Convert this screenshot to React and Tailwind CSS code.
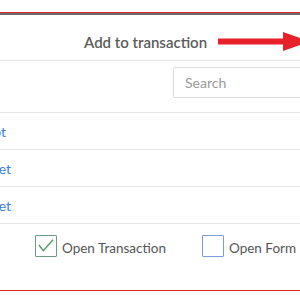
import { useState } from 'react';

const rows = [
  { label: 'Receipt', end: 'w-[6px]' },
  { label: 'Worksheet', end: 'w-[11px]' },
  { label: 'Timesheet', end: 'w-[11px]' },
];

const Divider = () => <div className="h-px bg-[#e9e5e5]" />;

const App = () => {
  const [openTransaction, setOpenTransaction] = useState(true);
  const [openForm, setOpenForm] = useState(false);

  return (
    <div
      className="relative w-[300px] h-[300px] overflow-hidden bg-white"
      style={{ fontFamily: 'Lato, "Open Sans", sans-serif' }}
    >
      {/* top rule */}
      <div className="h-[12px]" />
      <div className="h-px bg-[#e3262d]" />
      <div className="h-[2px] bg-[#6a6a6a]" />

      {/* header */}
      <div className="h-[45px] pt-[17px] pl-[84px]">
        <h2 className="text-[15px] leading-[20px] font-semibold text-[#5c5c5c] whitespace-nowrap">
          Add to transaction
        </h2>
      </div>
      <Divider />

      {/* search */}
      <div className="h-[51px] pt-[6px] pl-[173px]">
        <input
          type="text"
          placeholder="Search"
          className="w-[160px] h-[31px] border border-[#dcdcdc] rounded-[2px] px-[11px] text-[14px] text-[#555] placeholder:text-[#9a9a9a] outline-none"
        />
      </div>
      <Divider />

      {/* list */}
      {rows.map((row) => (
        <div key={row.label}>
          <div className="h-[36px] flex items-center">
            <div className={`${row.end} flex justify-end whitespace-nowrap`}>
              <a href="#" className="text-[14px] text-[#3b7fd9]">
                {row.label}
              </a>
            </div>
          </div>
          <Divider />
        </div>
      ))}

      {/* options */}
      <div className="h-[66px] pt-[11px] flex items-start">
        <label className="flex items-end ml-[35px] cursor-pointer">
          <button
            type="button"
            onClick={() => setOpenTransaction(!openTransaction)}
            className="w-[22px] h-[22px] border border-[#6f9a82] rounded-[1px] flex items-center justify-center"
          >
            {openTransaction && (
              <svg width="20" height="20" viewBox="0 0 20 20" fill="none">
                <path d="M3 9 L7.3 14.6 L17 3.8" stroke="#4f9a6a" strokeWidth="1.4" />
              </svg>
            )}
          </button>
          <span className="ml-[5px] mb-[-1px] text-[13.5px] leading-[20px] text-[#555] whitespace-nowrap">
            Open Transaction
          </span>
        </label>
        <label className="flex items-end ml-[36px] cursor-pointer">
          <button
            type="button"
            onClick={() => setOpenForm(!openForm)}
            className="w-[22px] h-[22px] border border-[#7c9ee0] rounded-[1px]"
          />
          <span className="ml-[5px] mb-[-1px] text-[13.5px] leading-[20px] text-[#555] whitespace-nowrap">
            Open Form
          </span>
        </label>
      </div>

      {/* bottom rule */}
      <div className="h-px bg-[#e3262d]" />

      {/* annotation arrow */}
      <svg className="absolute left-[218px] top-[31px]" width="82" height="21" viewBox="0 0 82 21">
        <rect x="0" y="7.5" width="68" height="6" fill="#e8202a" />
        <polygon points="65,1 92,10.5 65,20" fill="#e8202a" />
      </svg>
    </div>
  );
};

export default App;
